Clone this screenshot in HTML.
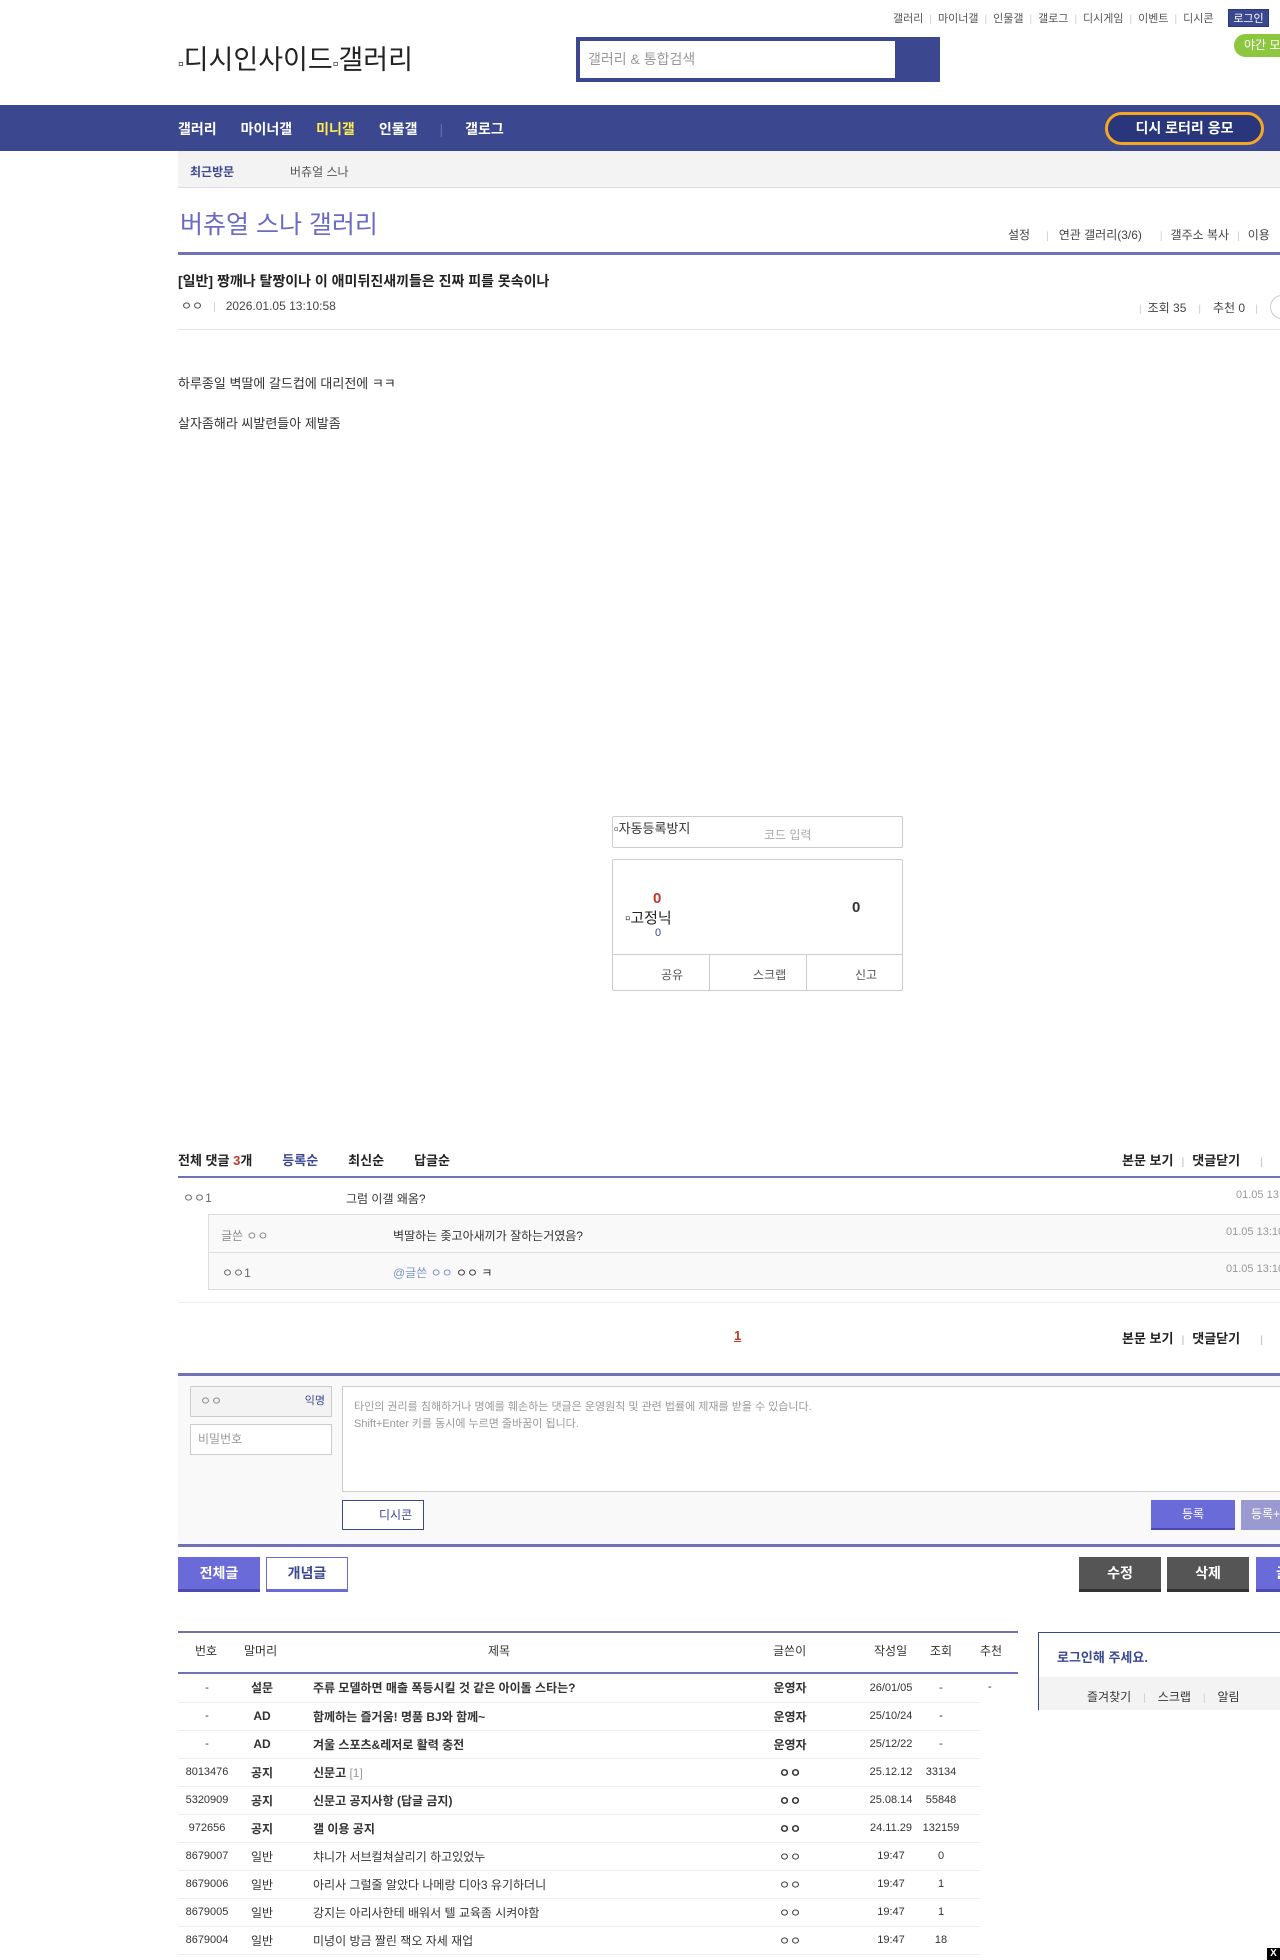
<!DOCTYPE html>
<html><head><meta charset="utf-8">
<style>
*{margin:0;padding:0;box-sizing:border-box}
body{width:1280px;height:1960px;position:relative;overflow:hidden;background:#fff;font-family:"Liberation Sans","Noto Sans CJK KR",sans-serif;color:#333;font-size:13px}
.a{position:absolute;white-space:nowrap}
.sep{color:#ccc;margin:0 6px;font-size:10px}
.b{font-weight:bold}
table{border-collapse:collapse}
</style></head><body>
<!-- top links -->
<div class="a" style="left:893px;top:10px;font-size:11px;color:#555">갤러리<span class="sep">|</span>마이너갤<span class="sep">|</span>인물갤<span class="sep">|</span>갤로그<span class="sep">|</span>디시게임<span class="sep">|</span>이벤트<span class="sep">|</span>디시콘</div>
<div class="a" style="left:1228px;top:9px;width:41px;height:18px;background:#3b4890;color:#fff;font-size:11px;text-align:center;line-height:18px;border:1px solid #29367c">로그인</div>
<div class="a" style="left:1234px;top:34px;width:60px;height:23px;background:#8dc63f;border-radius:12px;color:#fff;font-size:12px;line-height:23px;padding-left:10px">야간 모드</div>
<div class="a" style="left:178px;top:38px;font-size:27px;color:#222"><span style="font-size:16px">▫</span>디시인사이드<span style="font-size:16px">▫</span>갤러리</div>
<div class="a" style="left:576px;top:37px;width:364px;height:45px;background:#3b4890"></div>
<div class="a" style="left:580px;top:41px;width:315px;height:37px;background:#fff;font-size:14px;color:#999;line-height:37px;padding-left:8px">갤러리 &amp; 통합검색</div>
<!-- nav -->
<div class="a" style="left:0;top:105px;width:1280px;height:46px;background:#3b4890"></div>
<div class="a b" style="left:178px;top:119px;font-size:14px;color:#fff">갤러리<span style="margin-left:24px">마이너갤</span><span style="margin-left:24px;color:#ffed4e">미니갤</span><span style="margin-left:24px">인물갤</span><span style="margin-left:22px;color:#6370b0;font-weight:normal">|</span><span style="margin-left:22px">갤로그</span></div>
<div class="a b" style="left:1105px;top:112px;width:159px;height:33px;border:3px solid #f5a623;border-radius:17px;background:#29367c;color:#fff;font-size:14px;text-align:center;line-height:27px">디시 로터리 응모</div>
<div class="a" style="left:178px;top:151px;width:1102px;height:37px;background:#f3f3f3;border-bottom:1px solid #ddd"></div>
<div class="a" style="left:190px;top:163px;font-size:12px;color:#3b4890;font-weight:bold">최근방문</div>
<div class="a" style="left:290px;top:163px;font-size:12px;color:#555">버츄얼 스나</div>
<!-- title -->
<div class="a" style="left:180px;top:205px;font-size:25px;color:#6b6bc4">버츄얼 스나 갤러리</div>
<div class="a" style="left:1008px;top:226px;font-size:12px;color:#444">설정<span class="sep" style="margin:0 10px 0 16px">|</span>연관 갤러리(3/6)<span class="sep" style="margin:0 8px 0 18px">|</span>갤주소 복사<span class="sep" style="margin:0 8px">|</span>이용</div>
<div class="a" style="left:178px;top:252px;width:1102px;height:3px;background:#7171b8"></div>
<div class="a b" style="left:178px;top:271px;font-size:14px;color:#222">[일반] 짱깨나 탈짱이나 이 애미뒤진새끼들은 진짜 피를 못속이나</div>
<div class="a" style="left:181px;top:297px;font-size:12px;color:#444">ㅇㅇ<span class="sep" style="margin:0 10px">|</span>2026.01.05 13:10:58</div>
<div class="a" style="left:1133px;top:299px;font-size:12px;color:#444"><span class="sep">|</span>조회 35<span class="sep" style="margin:0 12px">|</span>추천 0<span class="sep" style="margin:0 10px">|</span></div>
<div class="a" style="left:1270px;top:295px;width:24px;height:24px;border:1px solid #ccc;border-radius:12px"></div>
<div class="a" style="left:178px;top:329px;width:1102px;height:1px;background:#e5e5e5"></div>
<div class="a" style="left:178px;top:373px;font-size:13px;color:#333">하루종일 벽딸에 갈드컵에 대리전에 ㅋㅋ</div>
<div class="a" style="left:178px;top:413px;font-size:13px;color:#333">살자좀해라 씨발련들아 제발좀</div>
<!-- captcha + recommend -->
<div class="a" style="left:612px;top:816px;width:291px;height:32px;border:1px solid #ccc;border-radius:2px"></div>
<div class="a" style="left:614px;top:818px;font-size:13px;color:#333">▫자동등록방지</div>
<div class="a" style="left:764px;top:826px;font-size:12px;color:#aaa">코드 입력</div>
<div class="a" style="left:612px;top:859px;width:291px;height:132px;border:1px solid #ccc;border-radius:2px"></div>
<div class="a" style="left:612px;top:954px;width:291px;height:1px;background:#ccc"></div>
<div class="a" style="left:709px;top:954px;width:1px;height:37px;background:#ccc"></div>
<div class="a" style="left:806px;top:954px;width:1px;height:37px;background:#ccc"></div>
<div class="a b" style="left:653px;top:890px;font-size:15px;color:#c0392b">0</div>
<div class="a" style="left:625px;top:907px;font-size:15px;color:#222">▫고정닉</div>
<div class="a" style="left:655px;top:927px;font-size:11px;color:#3b4890">0</div>
<div class="a b" style="left:852px;top:899px;font-size:15px;color:#333">0</div>
<div class="a" style="left:661px;top:966px;font-size:12px;color:#555">공유</div>
<div class="a" style="left:753px;top:966px;font-size:12px;color:#555">스크랩</div>
<div class="a" style="left:855px;top:966px;font-size:12px;color:#555">신고</div>
<!-- comments -->
<div class="a b" style="left:178px;top:1150px;font-size:13px;color:#222">전체 댓글 <span style="color:#c0392b">3</span>개<span style="margin-left:30px;color:#3b4890">등록순</span><span style="margin-left:30px">최신순</span><span style="margin-left:30px">답글순</span></div>
<div class="a b" style="left:1122px;top:1150px;font-size:13px;color:#222">본문 보기<span class="sep" style="margin:0 8px">|</span>댓글닫기<span class="sep" style="margin:0 20px">|</span></div>
<div class="a" style="left:178px;top:1176px;width:1102px;height:2px;background:#7171b8"></div>
<div class="a" style="left:183px;top:1189px;font-size:12px;color:#666">ㅇㅇ1</div>
<div class="a" style="left:346px;top:1190px;font-size:12px;color:#333">그럼 이갤 왜옴?</div>
<div class="a" style="left:1236px;top:1189px;font-size:11px;color:#999">01.05 13:10</div>
<div class="a" style="left:208px;top:1214px;width:1072px;height:76px;background:#f9f9f9;border:1px solid #ddd;border-right:none"></div>
<div class="a" style="left:208px;top:1252px;width:1072px;height:1px;background:#ddd"></div>
<div class="a" style="left:221px;top:1227px;font-size:12px;color:#888">글쓴 ㅇㅇ</div>
<div class="a" style="left:393px;top:1227px;font-size:12px;color:#333">벽딸하는 좆고아새끼가 잘하는거였음?</div>
<div class="a" style="left:1226px;top:1226px;font-size:11px;color:#999">01.05 13:10</div>
<div class="a" style="left:222px;top:1264px;font-size:12px;color:#666">ㅇㅇ1</div>
<div class="a" style="left:393px;top:1264px;font-size:12px;color:#333"><span style="color:#7c93c8">@글쓴 ㅇㅇ</span> ㅇㅇ ㅋ</div>
<div class="a" style="left:1226px;top:1263px;font-size:11px;color:#999">01.05 13:10</div>
<div class="a" style="left:178px;top:1302px;width:1102px;height:1px;background:#eee"></div>
<div class="a b" style="left:734px;top:1328px;font-size:13px;color:#c0392b;text-decoration:underline">1</div>
<div class="a b" style="left:1122px;top:1328px;font-size:13px;color:#222">본문 보기<span class="sep" style="margin:0 8px">|</span>댓글닫기<span class="sep" style="margin:0 20px">|</span></div>
<!-- form -->
<div class="a" style="left:178px;top:1373px;width:1102px;height:174px;background:#f9f9f9;border-top:3px solid #7171b8;border-bottom:3px solid #7171b8"></div>
<div class="a" style="left:190px;top:1386px;width:142px;height:31px;background:#f3f3f3;border:1px solid #ccc;font-size:12px;color:#888;line-height:29px;padding-left:9px">ㅇㅇ<span style="position:absolute;right:6px;color:#3b4890;font-size:11px">익명</span></div>
<div class="a" style="left:190px;top:1424px;width:142px;height:31px;background:#fff;border:1px solid #ccc;font-size:12px;color:#999;line-height:29px;padding-left:7px">비밀번호</div>
<div class="a" style="left:342px;top:1386px;width:950px;height:106px;background:#fff;border:1px solid #ccc"></div>
<div class="a" style="left:354px;top:1399px;font-size:11px;color:#999;line-height:17px">타인의 권리를 침해하거나 명예를 훼손하는 댓글은 운영원칙 및 관련 법률에 제재를 받을 수 있습니다.<br>Shift+Enter 키를 동시에 누르면 줄바꿈이 됩니다.</div>
<div class="a" style="left:342px;top:1500px;width:82px;height:30px;background:#fff;border:1px solid #3b4890;font-size:12px;color:#3b4890;line-height:28px;padding-left:36px">디시콘</div>
<div class="a" style="left:1151px;top:1500px;width:84px;height:30px;background:#6a6ad8;border-bottom:2px solid #4a4ab0;color:#fff;font-size:12px;text-align:center;line-height:28px">등록</div>
<div class="a" style="left:1241px;top:1500px;width:60px;height:30px;background:#9a9ad0;color:#fff;font-size:12px;line-height:28px;padding-left:10px">등록+추천</div>
<!-- buttons -->
<div class="a b" style="left:178px;top:1557px;width:82px;height:35px;background:#6a6ad8;border-bottom:3px solid #4a4ab0;color:#fff;font-size:14px;text-align:center;line-height:32px">전체글</div>
<div class="a b" style="left:266px;top:1557px;width:82px;height:35px;background:#fff;border:1px solid #6a6ad8;border-bottom:3px solid #6a6ad8;color:#3b4890;font-size:14px;text-align:center;line-height:30px">개념글</div>
<div class="a b" style="left:1079px;top:1557px;width:82px;height:35px;background:#555;border-bottom:3px solid #333;color:#fff;font-size:14px;text-align:center;line-height:32px">수정</div>
<div class="a b" style="left:1167px;top:1557px;width:82px;height:35px;background:#555;border-bottom:3px solid #333;color:#fff;font-size:14px;text-align:center;line-height:32px">삭제</div>
<div class="a b" style="left:1256px;top:1557px;width:82px;height:35px;background:#6a6ad8;border-bottom:3px solid #4a4ab0;color:#fff;font-size:14px;line-height:32px;padding-left:20px">글쓰기</div>
<!-- list -->
<div class="a" style="left:178px;top:1631px;width:840px;height:2px;background:#7171b8"></div>
<div class="a" style="left:178px;top:1672px;width:840px;height:2px;background:#7171b8"></div>
<div class="a" style="left:178px;top:1642px;width:840px;font-size:12px;color:#333;height:20px">
 <span class="a" style="left:17px">번호</span><span class="a" style="left:66px">말머리</span><span class="a" style="left:310px">제목</span><span class="a" style="left:595px">글쓴이</span><span class="a" style="left:696px">작성일</span><span class="a" style="left:752px">조회</span><span class="a" style="left:802px">추천</span>
</div>
<div class="a" style="left:178px;top:1674px;width:802px;font-size:12px">
<table style="width:802px;table-layout:fixed">
<colgroup><col style="width:58px"><col style="width:52px"><col style="width:450px"><col style="width:104px"><col style="width:24px"><col style="width:50px"><col style="width:50px"><col style="width:14px"></colgroup>
<tbody style="text-align:center">
<tr style="height:28px;border-bottom:1px solid #eee"><td style="font-size:11px">-</td><td class="b">설문</td><td class="b" style="text-align:left;padding-left:25px">주류 모델하면 매출 폭등시킬 것 같은 아이돌 스타는?</td><td class="b">운영자</td><td></td><td style="font-size:11px">26/01/05</td><td style="font-size:11px">-</td><td></td></tr>
<tr style="height:28px;border-bottom:1px solid #eee"><td style="font-size:11px">-</td><td class="b">AD</td><td class="b" style="text-align:left;padding-left:25px">함께하는 즐거움! 명품 BJ와 함께~</td><td class="b">운영자</td><td></td><td style="font-size:11px">25/10/24</td><td style="font-size:11px">-</td><td></td></tr>
<tr style="height:28px;border-bottom:1px solid #eee"><td style="font-size:11px">-</td><td class="b">AD</td><td class="b" style="text-align:left;padding-left:25px">겨울 스포츠&amp;레저로 활력 충전</td><td class="b">운영자</td><td></td><td style="font-size:11px">25/12/22</td><td style="font-size:11px">-</td><td></td></tr>
<tr style="height:28px;border-bottom:1px solid #eee"><td style="font-size:11px">8013476</td><td class="b">공지</td><td class="b" style="text-align:left;padding-left:25px">신문고 <span style="font-weight:normal;color:#999">[1]</span></td><td class="b">ㅇㅇ</td><td></td><td style="font-size:11px">25.12.12</td><td style="font-size:11px">33134</td><td></td></tr>
<tr style="height:28px;border-bottom:1px solid #eee"><td style="font-size:11px">5320909</td><td class="b">공지</td><td class="b" style="text-align:left;padding-left:25px">신문고 공지사항 (답글 금지)</td><td class="b">ㅇㅇ</td><td></td><td style="font-size:11px">25.08.14</td><td style="font-size:11px">55848</td><td></td></tr>
<tr style="height:28px;border-bottom:1px solid #eee"><td style="font-size:11px">972656</td><td class="b">공지</td><td class="b" style="text-align:left;padding-left:25px">갤 이용 공지</td><td class="b">ㅇㅇ</td><td></td><td style="font-size:11px">24.11.29</td><td style="font-size:11px">132159</td><td></td></tr>
<tr style="height:28px;border-bottom:1px solid #eee"><td style="font-size:11px">8679007</td><td>일반</td><td style="text-align:left;padding-left:25px">챠니가 서브컬쳐살리기 하고있었누</td><td>ㅇㅇ</td><td></td><td style="font-size:11px">19:47</td><td style="font-size:11px">0</td><td></td></tr>
<tr style="height:28px;border-bottom:1px solid #eee"><td style="font-size:11px">8679006</td><td>일반</td><td style="text-align:left;padding-left:25px">아리사 그럴줄 알았다 나메랑 디아3 유기하더니</td><td>ㅇㅇ</td><td></td><td style="font-size:11px">19:47</td><td style="font-size:11px">1</td><td></td></tr>
<tr style="height:28px;border-bottom:1px solid #eee"><td style="font-size:11px">8679005</td><td>일반</td><td style="text-align:left;padding-left:25px">강지는 아리사한테 배워서 텔 교육좀 시켜야함</td><td>ㅇㅇ</td><td></td><td style="font-size:11px">19:47</td><td style="font-size:11px">1</td><td></td></tr>
<tr style="height:28px;border-bottom:1px solid #eee"><td style="font-size:11px">8679004</td><td>일반</td><td style="text-align:left;padding-left:25px">미녕이 방금 짤린 잭오 자세 재업</td><td>ㅇㅇ</td><td></td><td style="font-size:11px">19:47</td><td style="font-size:11px">18</td><td></td></tr>
</tbody></table>
</div>
<div class="a" style="left:988px;top:1681px;font-size:11px;color:#333">-</div>
<!-- right box -->
<div class="a" style="left:1038px;top:1632px;width:250px;height:78px;border:1px solid #3b4890;border-bottom:none"></div>
<div class="a b" style="left:1057px;top:1647px;font-size:13px;color:#3b4890">로그인해 주세요.</div>
<div class="a" style="left:1039px;top:1677px;width:241px;height:33px;background:#f3f3f3"></div>
<div class="a" style="left:1087px;top:1688px;font-size:12px;color:#333">즐겨찾기<span class="sep" style="margin:0 12px">|</span>스크랩<span class="sep" style="margin:0 12px">|</span>알림</div>
<div class="a b" style="left:1267px;top:1948px;width:13px;height:12px;background:#000;color:#fff;font-size:10px;text-align:center;line-height:12px">X</div>
</body></html>
